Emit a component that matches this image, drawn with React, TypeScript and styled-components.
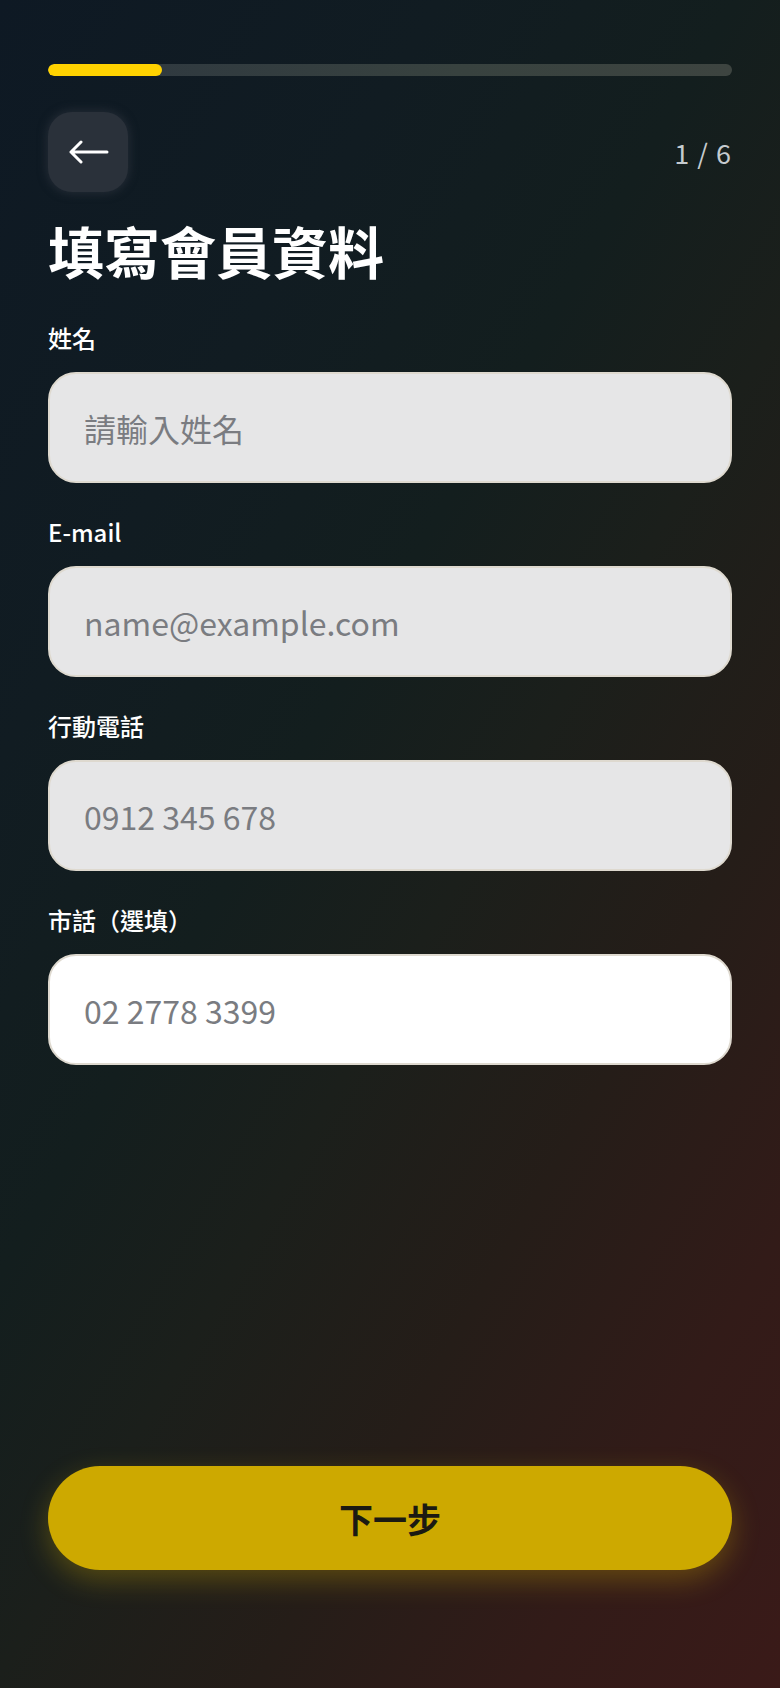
import React, { JSX } from 'react';
import styled, { createGlobalStyle } from 'styled-components';

const GlobalStyle = createGlobalStyle`
  html, body {
    margin: 0;
    padding: 0;
  }

  body {
    font-family: 'Noto Sans CJK TC', 'Noto Sans', sans-serif;
    background: #141c1f;
  }

  * {
    box-sizing: border-box;
  }
`;

const Page = styled.div`
  min-height: 100vh;
  display: flex;
  flex-direction: column;
  padding: 64px 48px 118px;
  background: linear-gradient(
    120deg,
    #0e1924 0%,
    #111c22 25%,
    #131e1e 42%,
    #1b1f1b 55%,
    #251d18 70%,
    #321b18 85%,
    #3a1a18 100%
  );
`;

const ProgressTrack = styled.div`
  height: 12px;
  border-radius: 6px;
  background: linear-gradient(90deg, #2d3740 0%, #38423f 60%, #3d4440 100%);
  overflow: hidden;
`;

const ProgressFill = styled.div`
  height: 100%;
  border-radius: 6px;
  background: #ffd200;
`;

const Header = styled.div`
  display: flex;
  align-items: center;
  justify-content: space-between;
  margin-top: 36px;
`;

const BackButton = styled.button`
  width: 80px;
  height: 80px;
  border: none;
  border-radius: 24px;
  background: #2a313a;
  box-shadow: 0 0 8px 2px rgba(42, 49, 58, 0.7);
  display: flex;
  align-items: center;
  justify-content: center;
  padding: 0;
  cursor: pointer;
`;

const StepCount = styled.span`
  font-size: 27px;
  color: #c5cbcf;
  letter-spacing: 1px;
`;

const Title = styled.h1`
  margin: 24px 0 0;
  font-size: 56px;
  line-height: 67px;
  font-weight: 700;
  color: #ffffff;
`;

const Form = styled.form`
  display: flex;
  flex-direction: column;
  gap: 33px;
  margin-top: 39px;
`;

const Field = styled.label`
  display: flex;
  flex-direction: column;
  gap: 18px;
`;

const FieldLabel = styled.span`
  font-size: 24px;
  line-height: 32px;
  font-weight: 500;
  color: #ffffff;
`;

const TextInput = styled.input<{ $active?: boolean }>`
  height: 111px;
  width: 100%;
  border: 2px solid #ded9cf;
  border-radius: 28px;
  padding: 0 34px;
  background: ${({ $active }) => ($active ? '#ffffff' : '#e6e6e7')};
  font-family: 'Noto Sans CJK TC', 'Noto Sans', sans-serif;
  font-size: 32px;
  color: #222;
  outline: none;

  &::placeholder {
    color: #7a7c81;
  }
`;

const NextButton = styled.button`
  margin-top: auto;
  height: 104px;
  border: none;
  border-radius: 52px;
  background: #cda900;
  box-shadow: 0 10px 28px rgba(205, 169, 0, 0.32);
  font-family: 'Noto Sans CJK TC', 'Noto Sans', sans-serif;
  font-size: 34px;
  font-weight: 700;
  color: #1b1a12;
  cursor: pointer;
`;

const BackArrow = () => (
  <svg width='42' height='24' viewBox='0 0 42 24' fill='none'>
    <path d='M40 12H4M14 2L4 12l10 10' stroke='#ffffff' strokeWidth='3' strokeLinecap='round' strokeLinejoin='round' />
  </svg>
);

const fields = [
  { label: '姓名', placeholder: '請輸入姓名', type: 'text' },
  { label: 'E-mail', placeholder: 'name@example.com', type: 'email' },
  { label: '行動電話', placeholder: '0912 345 678', type: 'tel' },
  { label: '市話（選填）', placeholder: '02 2778 3399', type: 'tel', active: true },
];

const step = 1;
const totalSteps = 6;

const App = (): JSX.Element => (
  <>
    <GlobalStyle />
    <Page>
      <ProgressTrack>
        <ProgressFill style={{ width: `${(step / totalSteps) * 100}%` }} />
      </ProgressTrack>
      <Header>
        <BackButton type='button' aria-label='返回'>
          <BackArrow />
        </BackButton>
        <StepCount>
          {step} / {totalSteps}
        </StepCount>
      </Header>
      <Title>填寫會員資料</Title>
      <Form onSubmit={(e) => e.preventDefault()}>
        {fields.map((field) => (
          <Field key={field.label}>
            <FieldLabel>{field.label}</FieldLabel>
            <TextInput type={field.type} placeholder={field.placeholder} $active={field.active} />
          </Field>
        ))}
      </Form>
      <NextButton type='button'>下一步</NextButton>
    </Page>
  </>
);

export default App;
